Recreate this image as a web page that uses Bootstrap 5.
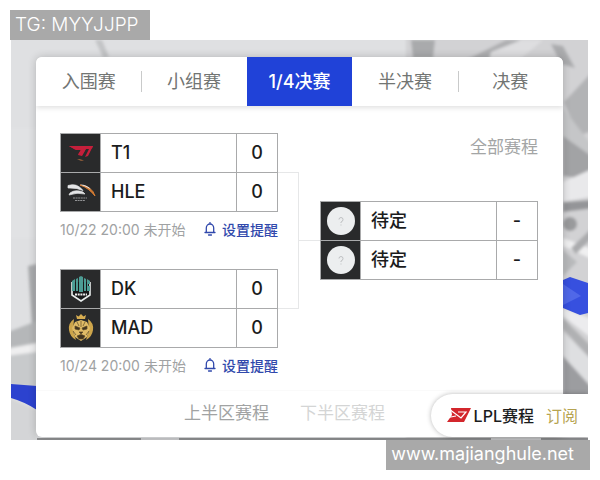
<!DOCTYPE html>
<html lang="zh-CN">
<head>
<meta charset="utf-8">
<meta name="viewport" content="width=device-width, initial-scale=1">
<title>赛程</title>
<link href="https://cdn.jsdelivr.net/npm/bootstrap@5.3.0/dist/css/bootstrap.min.css" rel="stylesheet">
<style>
body { font-family: Inter, "Noto Sans CJK SC", sans-serif; color: #1b1c1d; background: #fff; padding: 10px; }
.stamp { background: #a9a9a9; color: #fff; height: 30px; line-height: 30px; padding: 0 11px 0 5px; font-family: Inter, sans-serif; font-weight: 300; font-size: 19px; }
.stamp-bottom { font-size: 18px; font-weight: 400; line-height: 28px; padding-right: 16px; }
.scene { margin: 0 2px 0 1px; padding: 17px 25px 3px; overflow: hidden; background: #dfe0e2; }
.scene-art { inset: 0; }
.panel { border-radius: 6px; box-shadow: 0 0 8px rgba(0,0,0,.2); overflow: hidden; }
.stages { height: 49px; box-shadow: 0 2px 5px rgba(0,0,0,.12); }
.stages .btn { flex: 1 1 0; border: 0; border-radius: 0; padding: 0; font-size: 18px; color: #727573; }
.stages .btn.active { background: #2042d8; color: #fff; font-weight: 500; }
.sep { width: 1px; height: 21px; background: #c9caca; margin-right: -1px; }
.bracket { padding: 27px 25px 8px 24px; }
.side { flex: 218 1 0; }
.links { flex: 42 1 0; height: 137px; margin-top: 39px; }
.links-in { border: 1px solid #e6e7e8; border-left: 0; }
.links-out { height: 69px; border-bottom: 1px solid #e6e7e8; }
.fixture { border-collapse: collapse; table-layout: fixed; font-size: 18px; font-weight: 500; line-height: 24px; }
.fixture tr { height: 39px; }
.fixture td, .fixture th { border: 1px solid #a9aaab; padding: 0; font-weight: 500; }
.fixture .crest { width: 40px; background: #292a2b; }
.fixture .crest svg { display: block; margin: auto; }
.fixture th { padding-left: 10px; }
.fixture .pts { width: 41px; text-align: center; }
.meta { height: 34px; font-size: 14px; color: #a0a2a3; }
.meta .btn { font-size: 14px; color: #3149ac; border: 0; font-weight: 500; gap: 6px; }
.meta + .fixture { margin-top: 23px; }
.all { font-size: 17px; line-height: 28px; margin-bottom: 40px; color: #a3a5a5; }
.halves { height: 47px; gap: 31px; padding-right: 30px; border-top: 1px solid #fafafa; }
.halves .btn { font-size: 17px; color: #a1a3a3; border: 0; }
.halves .btn.faded { color: #d4d5d5; }
.subscribe { right: 0; bottom: 3px; height: 43px; padding: 0 10px 0 16px; font-size: 16px; box-shadow: 0 0 5px rgba(0,0,0,.28); }
.subscribe svg { margin-right: 3px; }
.subscribe a { color: #b6a451; margin-left: 12px; }
</style>
</head>
<body>
<div class="d-flex"><div class="stamp">TG: MYYJJPP</div></div>

<main class="scene position-relative">
  <svg class="scene-art position-absolute w-100 h-100" viewBox="0 0 577 400" preserveAspectRatio="none" aria-hidden="true">
    <defs><filter id="soft"><feGaussianBlur stdDeviation="1.5"/></filter></defs>
    <g filter="url(#soft)">
      <path d="M84 0l7 0 7 17h-6z" fill="#c3c4c6"/>
      <path d="M395 -5h190v410H395z" fill="#d2d2d4"/>
      <path d="M400 0h24l-2 18h-20z" fill="#a9aaac"/>
      <path d="M455 20l40-20h15l-22 20z" fill="#aeafb1"/>
      <path d="M480 12l30-12h22l-24 20h-30z" fill="#dedee0"/>
      <path d="M540 4l12 2 12 22-14-4z" fill="#aaabad"/>
      <path d="M553 62l30-32v60l-16 6z" fill="#b2b3b5"/>
      <path d="M552 68l31 40v38l-31-34z" fill="#c5c6c8"/>
      <path d="M552 96l31 22v22l-31-4z" fill="#a2a3a5"/>
      <path d="M552 142l31-14v28l-31 6z" fill="#e9e9eb"/>
      <path d="M552 172l31-4v-8l-31 2z" fill="#949598"/>
      <circle cx="559" cy="184" r="7" fill="#999a9c"/>
      <path d="M552 198l31 12v10l-31-14z" fill="#f0f0f1"/>
      <path d="M560 208l23-22v10l-18 18z" fill="#aaabad"/>
      <path d="M552 210l14 12-14 14z" fill="#b8b9bb"/>
      <path d="M-6 88h32v110H-6z" fill="#e1e2e4"/>
      <path d="M17 144l9-2v62h-5z" transform="translate(0 -38)" fill="none"/>
      <path d="M17 226l9-2v60h-5z" fill="#aaacae"/>
      <path d="M-6 293l32-12v24l-32 6z" fill="#b5b7b9"/>
      <path d="M-6 309l32-6v9l-32 6z" fill="#efeff0"/>
      <path d="M-6 316l32-4v36l-32-4z" fill="#c8cacc"/>
      <path d="M-6 356l32 14v35H-6z" fill="#d4d5d7"/>
      <path d="M552 268l31 12v20l-31-24z" fill="#ececee"/>
      <path d="M552 278l31 31v14l-31-34z" fill="#b0b1b3"/>
      <path d="M552 292l31 30v30l-31-33z" fill="#dedfe1"/>
      <path d="M552 316l31 34v26h-31z" fill="#9c9da0"/>
    </g>
    <path d="M0 344l26 2v24q-12-8-26-12z" fill="#2c42cf"/>
    <path d="M552 240l7-3 18 6v30l-8 2-17-7z" fill="#3750df"/>
    <path d="M552 244l18 12-18 9z" fill="#5068e8"/>
    <path d="M26 398h551v2H26z" fill="#8d8e90"/>
    <path d="M130 398h38v2h-38zM480 398h50v2h-50z" fill="#c9cacc"/>
  </svg>

  <section class="panel bg-white position-relative">
    <nav class="stages d-flex align-items-center bg-white position-relative" aria-label="赛段">
      <button type="button" class="btn h-100">入围赛</button>
      <span class="sep"></span>
      <button type="button" class="btn h-100">小组赛</button>
      <button type="button" class="btn h-100 active">1/4决赛</button>
      <button type="button" class="btn h-100">半决赛</button>
      <span class="sep"></span>
      <button type="button" class="btn h-100">决赛</button>
    </nav>

    <div class="bracket d-flex">
      <div class="side">
        <table class="fixture w-100">
          <tr>
            <td class="crest"><svg width="28" height="24" viewBox="0 0 28 24"><path d="M2 5h24l-5 10-3 1 4-8h-3l-4 7-4-1 3-5H9z" fill="#c51f3b"/><path d="M2 5h24l-1 2.500H19l-4 7-4-1 3-5H8z" fill="#c51f3b"/><path d="M10 18l3 0 4 1.500-3 .5z" fill="#8d5b38"/></svg></td>
            <th scope="row">T1</th><td class="pts">0</td>
          </tr>
          <tr>
            <td class="crest"><svg width="32" height="26" viewBox="0 0 32 26"><path d="M3 6.500q9-3 15 5-6-3-15-2.500zM5 14q5-4 13-1l2 2q-8-2-16 1z" fill="#e4e5e7" stroke="#e4e5e7" stroke-width=".7"/><path d="M15 6q12 1 15 11-6-8-15-11z" fill="#d57c33" stroke="#d57c33"/><path d="M15 5.500q7 0 11 5-5-3-11-5z" fill="#e7e7e7"/><path d="M8 19h14M10 21.500h10" stroke="#929395" stroke-dasharray="2 .6"/></svg></td>
            <th scope="row">HLE</th><td class="pts">0</td>
          </tr>
        </table>
        <div class="meta d-flex justify-content-between align-items-center text-nowrap">
          <span>10/22 20:00 未开始</span>
          <button type="button" class="btn p-0 d-flex align-items-center"><svg width="12" height="14" viewBox="0 0 12 14" fill="none" stroke="#3149ac" stroke-width="1.300"><path d="M6 .5v1M1 10.500h10M2.300 10V6a3.700 4 0 0 1 7.400 0v4M4.500 13h3" stroke-linecap="round"/></svg>设置提醒</button>
        </div>
        <table class="fixture w-100">
          <tr>
            <td class="crest"><svg width="22" height="28" viewBox="0 0 22 28"><path d="M2 7v13l9 6 9-6V7" fill="#17191a" stroke="#e9eeee" stroke-width="1.600"/><path d="M2 6l3-2v12H2zM6 4l2-1v13H6zM9 2l2-1 2 1v15H9zM14 3l2 1v12h-2zM17 4l3 2v3h-2v2h2v5h-3z" fill="#4c9c94"/><path d="M5 19.500h12" stroke="#eee" stroke-width="2" stroke-dasharray="2 .7"/></svg></td>
            <th scope="row">DK</th><td class="pts">0</td>
          </tr>
          <tr>
            <td class="crest"><svg width="28" height="30" viewBox="0 0 28 30"><path d="M9 2l2.500 1.500L14 1l2.500 2.500L19 2l-1 4h-8z" fill="#d6ad51"/><path d="M7 6Q1 10 2 17t7 10l-3-9zM21 6q6 4 5 11t-7 10l3-9z" fill="#cda54b"/><path d="M8 9l6-2 6 2 3 6-3 9-6 4-6-4-3-9z" fill="#e0bb66"/><path d="M8 13l5 2-1 2-4-1zM20 13l-5 2 1 2 4-1zM12 19h4l-2 2zM10 23q4-3 8 0l-2 3h-4zM14 8v6M10 9l2 4M18 9l-2 4M6 18l3 4M22 18l-3 4" fill="#413420" stroke="#5c4927" stroke-width=".7"/></svg></td>
            <th scope="row">MAD</th><td class="pts">0</td>
          </tr>
        </table>
        <div class="meta d-flex justify-content-between align-items-center text-nowrap">
          <span>10/24 20:00 未开始</span>
          <button type="button" class="btn p-0 d-flex align-items-center"><svg width="12" height="14" viewBox="0 0 12 14" fill="none" stroke="#3149ac" stroke-width="1.300"><path d="M6 .5v1M1 10.500h10M2.300 10V6a3.700 4 0 0 1 7.400 0v4M4.500 13h3" stroke-linecap="round"/></svg>设置提醒</button>
        </div>
      </div>

      <div class="links d-flex" aria-hidden="true">
        <div class="links-in w-50"></div>
        <div class="links-out w-50"></div>
      </div>

      <div class="side">
        <div class="all text-end"><a href="#" class="text-reset text-decoration-none">全部赛程</a></div>
        <table class="fixture w-100">
          <tr>
            <td class="crest"><svg width="28" height="28" viewBox="0 0 28 28"><circle cx="14" cy="14" r="14" fill="#eceeef"/><path d="M12 12.500q0-2 2-2t2 2-2 2.500v1M14 17.500v1" fill="none" stroke="#bfc1c3"/></svg></td>
            <th scope="row">待定</th><td class="pts">-</td>
          </tr>
          <tr>
            <td class="crest"><svg width="28" height="28" viewBox="0 0 28 28"><circle cx="14" cy="14" r="14" fill="#eceeef"/><path d="M12 12.500q0-2 2-2t2 2-2 2.500v1M14 17.500v1" fill="none" stroke="#bfc1c3"/></svg></td>
            <th scope="row">待定</th><td class="pts">-</td>
          </tr>
        </table>
      </div>
    </div>

    <div class="halves d-flex justify-content-center align-items-center">
      <button type="button" class="btn p-0">上半区赛程</button>
      <button type="button" class="btn p-0 faded">下半区赛程</button>
    </div>
  </section>

  <div class="subscribe position-absolute d-flex align-items-center bg-white rounded-start-pill text-nowrap">
    <svg width="24" height="15" viewBox="0 0 24 15"><path d="M4 0h20l-7 14H0l5-7z" fill="#d3262c"/><path d="M2 1l12 9 5-6-8 0M1 9.500l8-1.500" fill="none" stroke="#fff" stroke-width="1.200"/></svg>
    <span class="fw-medium">LPL赛程</span>
    <a href="#" class="text-decoration-none">订阅</a>
  </div>
</main>

<div class="d-flex justify-content-end"><div class="stamp stamp-bottom">www.majianghule.net</div></div>
<script src="https://cdn.jsdelivr.net/npm/bootstrap@5.3.0/dist/js/bootstrap.bundle.min.js"></script>
</body>
</html>
